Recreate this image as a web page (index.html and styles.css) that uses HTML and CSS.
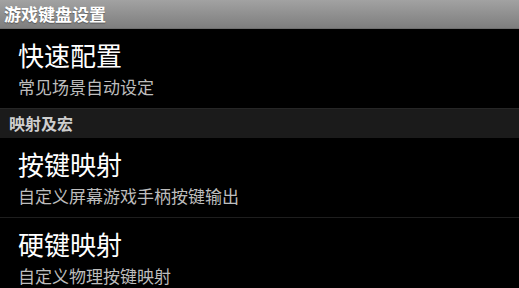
FILE: index.html
```html
<!DOCTYPE html>
<html lang="zh-CN">
<head>
  <meta charset="UTF-8">
  <meta name="viewport" content="width=device-width, initial-scale=1.0">
  <title>游戏键盘设置</title>
  <link rel="stylesheet" href="styles.css">
</head>
<body>
  <div class="title-bar">游戏键盘设置</div>

  <div class="pref-item">
    <div class="pref-title">快速配置</div>
    <div class="pref-summary">常见场景自动设定</div>
  </div>

  <div class="pref-category">映射及宏</div>

  <div class="pref-item">
    <div class="pref-title">按键映射</div>
    <div class="pref-summary">自定义屏幕游戏手柄按键输出</div>
  </div>
  <div class="divider"></div>
  <div class="pref-item">
    <div class="pref-title">硬键映射</div>
    <div class="pref-summary">自定义物理按键映射</div>
  </div>
</body>
</html>
```

FILE: styles.css
```css
body {
  margin: 0;
  background: #000;
  font-family: "Noto Sans CJK SC", "Noto Sans", sans-serif;
  color: #fff;
  overflow: hidden;
}

/* ---- thanh tiêu đề ---- */
.title-bar {
  height: 28px;
  line-height: 28px;
  padding-left: 4px;
  font-size: 17px;
  font-weight: bold;
  color: #fff;
  text-shadow: 0 1px 1px rgba(0, 0, 0, 0.35);
  background: linear-gradient(#a2a2a2, #7e7e7e);
  border-bottom: 1px solid #6e6e6e;
}

.pref-item {
  height: 79px;
  box-sizing: border-box;
  padding: 9px 0 0 18px;
}

.pref-title {
  font-size: 26px;
  line-height: 34px;
  color: #fff;
}

.pref-summary {
  margin-top: 4px;
  font-size: 17px;
  line-height: 22px;
  color: #bdbdbd;
}

.pref-category {
  height: 29px;
  line-height: 29px;
  padding-left: 9px;
  font-size: 16px;
  font-weight: bold;
  color: #cfcfcf;
  background: #1b1b1b;
  border-top: 1px solid #262626;
}

.divider {
  height: 1px;
  background: #1e1e1e;
}
```
